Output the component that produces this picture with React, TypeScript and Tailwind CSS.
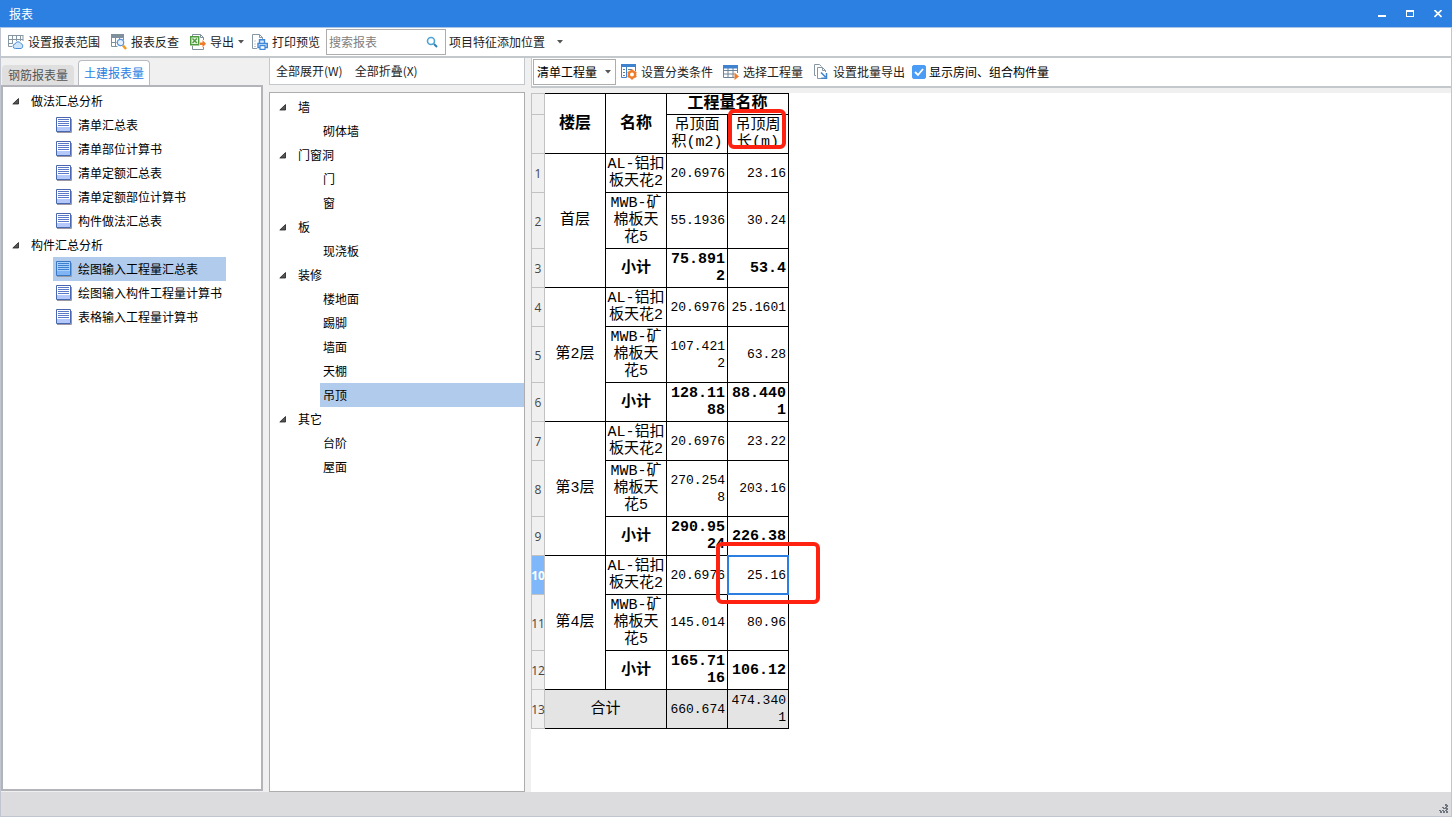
import { Fragment, useState } from "react";
import type { ReactNode } from "react";
import clsx from "clsx";

type TreeGroup = { label: string; items: string[] };
type Item = { name: string[]; area: string[]; length: string[] };
type Floor = { floor: string; items: Item[]; subtotal: { area: string[]; length: string[] } };

const reportTree: TreeGroup[] = [
    { label: "做法汇总分析", items: ["清单汇总表", "清单部位计算书", "清单定额汇总表", "清单定额部位计算书", "构件做法汇总表"] },
    { label: "构件汇总分析", items: ["绘图输入工程量汇总表", "绘图输入构件工程量计算书", "表格输入工程量计算书"] },
];

const componentTree: TreeGroup[] = [
    { label: "墙", items: ["砌体墙"] },
    { label: "门窗洞", items: ["门", "窗"] },
    { label: "板", items: ["现浇板"] },
    { label: "装修", items: ["楼地面", "踢脚", "墙面", "天棚", "吊顶"] },
    { label: "其它", items: ["台阶", "屋面"] },
];

const AL = ["AL-铝扣", "板天花2"];
const MWB = ["MWB-矿", "棉板天", "花5"];

const floors: Floor[] = [
    {
        floor: "首层",
        items: [
            { name: AL, area: ["20.6976"], length: ["23.16"] },
            { name: MWB, area: ["55.1936"], length: ["30.24"] },
        ],
        subtotal: { area: ["75.891", "2"], length: ["53.4"] },
    },
    {
        floor: "第2层",
        items: [
            { name: AL, area: ["20.6976"], length: ["25.1601"] },
            { name: MWB, area: ["107.421", "2"], length: ["63.28"] },
        ],
        subtotal: { area: ["128.11", "88"], length: ["88.440", "1"] },
    },
    {
        floor: "第3层",
        items: [
            { name: AL, area: ["20.6976"], length: ["23.22"] },
            { name: MWB, area: ["270.254", "8"], length: ["203.16"] },
        ],
        subtotal: { area: ["290.95", "24"], length: ["226.38"] },
    },
    {
        floor: "第4层",
        items: [
            { name: AL, area: ["20.6976"], length: ["25.16"] },
            { name: MWB, area: ["145.014"], length: ["80.96"] },
        ],
        subtotal: { area: ["165.71", "16"], length: ["106.12"] },
    },
];

const SELECTED_ROW = 10;

function Caret() {
    return (
        <svg width="6" height="4" viewBox="0 0 6 4" className="shrink-0" aria-hidden="true">
            <path d="M0 0h6L3 3.5z" fill="#555" />
        </svg>
    );
}

function RangeIcon() {
    return (
        <svg width="16" height="16" viewBox="0 0 16 16" className="shrink-0" fill="none" aria-hidden="true">
            <path d="M0 1.500h15M0 5.500h15M0 9.500h5M.5 1v11.500H4M4.500 1v9M8.500 1v6M12.500 1v6M15 1v6" stroke="#8796a3" />
            <path d="M7.500 14.500a2.300 2.300 0 0 1-.3-4.600 3 3 0 0 1 5.600-.4 2.600 2.600 0 0 1 .2 5z" fill="#cfe5fa" stroke="#4a90d9" />
        </svg>
    );
}

function InspectIcon() {
    return (
        <svg width="16" height="16" viewBox="0 0 16 16" className="shrink-0" fill="none" aria-hidden="true">
            <path d="M0 0h13v4H0z" fill="#7f8f9c" />
            <path d="M.5 1v11.500h6M12.500 4v2M.5 8.500h5M4.500 4v8.500M8.500 4v1" stroke="#7f8f9c" />
            <circle cx="9.500" cy="8.500" r="3.200" fill="#e6f2ff" stroke="#5b93dd" strokeWidth="1.200" />
            <path d="m12 11.500 3 3.500" stroke="#f29a1f" strokeWidth="2.500" />
        </svg>
    );
}

function ExportIcon() {
    return (
        <svg width="16" height="16" viewBox="0 0 16 16" className="shrink-0" fill="none" aria-hidden="true">
            <path d="M2.500 2V.5h8l3 3V6M2.500 12v3.500h11V13M10.500.5v3h3" stroke="#7f8f9c" />
            <path d="M.7 2.700h8v8h-8z" fill="#e8f5e4" stroke="#4f9b3f" strokeWidth="1.400" />
            <path d="m2.500 4.500 4.400 4.400M6.900 4.500 2.500 8.900" stroke="#4f9b3f" strokeWidth="1.400" />
            <path d="M10 8.500h2.500V6L16 9.700l-3.500 3.700V11H10z" fill="#f07a28" />
        </svg>
    );
}

function PrintIcon() {
    return (
        <svg width="16" height="16" viewBox="0 0 16 16" className="shrink-0" fill="none" aria-hidden="true">
            <path d="M5 14.500H.5V.5h7l3 3V5M7.500.5v3h3" stroke="#8796a3" />
            <path d="M2.500 7h2M2.500 10h2M2.500 12.500h2" stroke="#8796a3" strokeDasharray="1 1" />
            <path d="M7.500 9V5.700h5V9M6 9.500h9.300v4H6z" stroke="#3f87d8" strokeWidth="1.400" fill="#dcebfb" />
            <path d="M8 11.700h5v3.600H8z" stroke="#3f87d8" strokeWidth="1.200" fill="#fff" />
        </svg>
    );
}

function ClassifyIcon() {
    return (
        <svg width="16" height="16" viewBox="0 0 16 16" className="shrink-0" fill="none" aria-hidden="true">
            <path d="M.5 1.500h14V7M.5 1.500v12h5M5.500 1.500v12" stroke="#3f83cf" />
            <path d="M0 0h15v3H0z" fill="#3f83cf" />
            <path d="M2 5.500h2M2 8.500h2M2 11.500h2M7 5.500h4" stroke="#6b7d8c" />
            <circle cx="11" cy="10.500" r="3.200" stroke="#ee7d2b" strokeWidth="2.400" fill="#fff" />
            <path d="M11 5.500v2M11 13.500v2M6.700 8l1.600 1M13.700 12l1.600 1M6.700 13l1.600-1M13.700 9l1.600-1" stroke="#ee7d2b" strokeWidth="2" />
        </svg>
    );
}

function QuantityIcon() {
    return (
        <svg width="16" height="16" viewBox="0 0 16 16" className="shrink-0" fill="none" aria-hidden="true">
            <path d="M.5 2v11.500h11M.5 6.500h14M.5 10h11M5 4v9.500M10 4v9.500M14.500 2v7" stroke="#6f8496" />
            <path d="M0 1h15v3.500H0z" fill="#3f83cf" />
            <path d="m11.500 8.500 4.500 4-4.500 3.500z" fill="#ee7d2b" />
        </svg>
    );
}

function BatchIcon() {
    return (
        <svg width="16" height="16" viewBox="0 0 16 16" className="shrink-0" fill="none" aria-hidden="true">
            <path d="M3 11.500H1.500V.5h5l2 2" stroke="#8796a3" />
            <path d="M9 14.500H4.500v-11h5l3 3V8M9.500 3.500v3h3" stroke="#8796a3" fill="#fff" />
            <path d="m8 8.500 4.500 4.500M13.500 9v5.200H8.300" stroke="#3f83cf" strokeWidth="1.500" />
        </svg>
    );
}

function ReportIcon({ active }: { active: boolean }) {
    return (
        <svg width="17" height="16" viewBox="0 0 17 16" className="shrink-0" fill="none" aria-hidden="true">
            <path d="M2 15.500h14.500V2" stroke="#9a9aa2" />
            <path d="M1.500.5h14v14h-14z" fill={active ? "#a8d0fa" : "#fff"} stroke={active ? "#3a78c4" : "#4a66b0"} />
            <path d="M2 10h13v4H2z" fill={active ? "#7fb4f5" : "#b5c8fa"} />
            <path d="M3 2.500h11M3 4.500h11M3 6.500h11M3 8.500h11" stroke={active ? "#3f7fd0" : "#5b78c8"} />
        </svg>
    );
}

function ToolButton({ icon, caret, children }: { icon: ReactNode; caret?: boolean; children: ReactNode }) {
    return (
        <button type="button" className={clsx("flex h-5 items-center gap-1 rounded-sm whitespace-nowrap text-[#222]", caret ? "pr-0.5 pl-[5px]" : "px-[5px]")}>
            {icon}
            <span>{children}</span>
            {caret && <Caret />}
        </button>
    );
}

function Expander() {
    return (
        <svg width="7" height="7" viewBox="0 0 7 7" className="shrink-0" aria-hidden="true">
            <path d="M6.500.5v5.500H.8z" fill="#555" stroke="#222" strokeWidth=".8" />
        </svg>
    );
}

function ReportTree() {
    const [active, setActive] = useState("绘图输入工程量汇总表");

    return (
        <ul className="pt-0.5">
            {reportTree.map((group) => (
                <li key={group.label}>
                    <button type="button" className="flex h-6 items-center gap-3 pl-[9px]">
                        <Expander />
                        <span>{group.label}</span>
                    </button>
                    <ul className="flex flex-col items-start pl-[50px]">
                        {group.items.map((item) => (
                            <li key={item}>
                                <button
                                    type="button"
                                    onClick={() => setActive(item)}
                                    className={clsx("flex h-6 items-center gap-1.5 pr-7 pl-0.5 whitespace-nowrap", item === active && "bg-[#b1cbed]")}
                                >
                                    <ReportIcon active={item === active} />
                                    <span>{item}</span>
                                </button>
                            </li>
                        ))}
                    </ul>
                </li>
            ))}
        </ul>
    );
}

function ComponentTree() {
    const [active, setActive] = useState("吊顶");

    return (
        <ul className="pt-0.5">
            {componentTree.map((group) => (
                <li key={group.label}>
                    <button type="button" className="flex h-6 items-center gap-3 pl-[9px]">
                        <Expander />
                        <span>{group.label}</span>
                    </button>
                    <ul className="pl-[50px]">
                        {group.items.map((item) => (
                            <li key={item}>
                                <button
                                    type="button"
                                    onClick={() => setActive(item)}
                                    className={clsx("block h-6 w-full pl-[3px] text-left", item === active && "bg-[#b1cbed]")}
                                >
                                    {item}
                                </button>
                            </li>
                        ))}
                    </ul>
                </li>
            ))}
        </ul>
    );
}

function RowNumber({ value }: { value?: number }) {
    const selected = value === SELECTED_ROW;
    return (
        <th
            scope="row"
            className={clsx(
                "border-x border-b border-[#c2c2c2] p-0 pt-0.5 font-['Open_Sans',sans-serif] text-xs",
                selected ? "bg-[#7fb8fa] font-bold text-white" : "bg-[#f0f0f0] font-normal text-[#444]",
            )}
        >
            <div className="flex justify-center">{value}</div>
        </th>
    );
}

function Lines({ lines }: { lines: string[] }) {
    return lines.map((line, i) => (
        <Fragment key={i}>
            {i > 0 && <br />}
            {line}
        </Fragment>
    ));
}

function NameCell({ lines }: { lines: string[] }) {
    return (
        <td className="border-r border-b border-black p-0 text-center whitespace-nowrap">
            <Lines lines={lines} />
        </td>
    );
}

function NumberCell({ lines, bold, marked }: { lines: string[]; bold?: boolean; marked?: boolean }) {
    return (
        <td
            className={clsx(
                "border-r border-b border-black p-0 pr-0.5 text-right whitespace-nowrap",
                bold ? "text-[15px] font-bold" : "text-[13px]",
                marked && "relative",
            )}
        >
            <Lines lines={lines} />
            {marked && (
                <>
                    <span className="absolute -inset-px border-2 border-[#2c7fe0]" />
                    <span className="absolute -top-3.5 -right-8 -bottom-2.5 -left-3 rounded-md border-4 border-[#ff2211]" />
                </>
            )}
        </td>
    );
}

function QuantityTable() {
    let row = 0;
    return (
        <table className="w-[258px] table-fixed border-separate border-spacing-0 bg-white font-['Liberation_Mono','Noto_Sans_CJK_SC',monospace] text-[15px] leading-[17px] text-black">
            <colgroup>
                <col className="w-3.5" />
                <col className="w-[61px]" />
                <col className="w-[61px]" />
                <col className="w-[61px]" />
                <col className="w-[61px]" />
            </colgroup>
            <thead>
                <tr className="h-[22px]">
                    <td className="border border-[#c2c2c2] bg-[#f0f0f0] p-0" />
                    <th rowSpan={2} className="border-y border-r border-black p-0 text-base">楼层</th>
                    <th rowSpan={2} className="border-y border-r border-black p-0 text-base">名称</th>
                    <th colSpan={2} className="border-y border-r border-black p-0 text-base leading-[18px]">工程量名称</th>
                </tr>
                <tr className="h-[39px]">
                    <td className="border-x border-b border-[#c2c2c2] bg-[#f0f0f0] p-0" />
                    <th className="border-r border-b border-black p-0 font-normal"><Lines lines={["吊顶面", "积(m2)"]} /></th>
                    <th className="relative border-r border-b border-black p-0 font-normal">
                        <Lines lines={["吊顶周", "长(m)"]} />
                        <span className="absolute -top-1.5 right-0.5 bottom-1 left-0 rounded-md border-4 border-[#ff2211]" />
                    </th>
                </tr>
            </thead>
            <tbody>
                {floors.map((f) => (
                    <Fragment key={f.floor}>
                        {f.items.map((item, i) => {
                            row += 1;
                            return (
                                <tr key={i} className={item.name.length > 2 ? "h-14" : "h-[39px]"}>
                                    <RowNumber value={row} />
                                    {i === 0 && (
                                        <td rowSpan={3} className="border-r border-b border-black p-0 text-center">{f.floor}</td>
                                    )}
                                    <NameCell lines={item.name} />
                                    <NumberCell lines={item.area} />
                                    <NumberCell lines={item.length} marked={row === SELECTED_ROW} />
                                </tr>
                            );
                        })}
                        <tr className="h-[39px]">
                            <RowNumber value={++row} />
                            <td className="border-r border-b border-black p-0 text-center font-bold">小计</td>
                            <NumberCell lines={f.subtotal.area} bold />
                            <NumberCell lines={f.subtotal.length} bold />
                        </tr>
                    </Fragment>
                ))}
                <tr className="h-[39px] bg-[#e4e4e4]">
                    <RowNumber value={++row} />
                    <td colSpan={2} className="border-r border-b border-black p-0 text-center">合计</td>
                    <NumberCell lines={["660.674"]} />
                    <NumberCell lines={["474.340", "1"]} />
                </tr>
            </tbody>
        </table>
    );
}

function TitleBar() {
    return (
        <header className="flex h-7 shrink-0 items-center justify-between border-b border-[#a9c4e6] bg-[#2c80e2] pr-2.5 pl-[9px] text-white">
            <h1>报表</h1>
            <div className="flex gap-5">
                <button type="button" aria-label="最小化">
                    <svg width="8" height="8" viewBox="0 0 8 8"><path d="M0 5h8v2H0z" fill="#fff" /></svg>
                </button>
                <button type="button" aria-label="最大化">
                    <svg width="8" height="8" viewBox="0 0 8 8"><path d="M0 0h8v7H0zM1 2v4h6V2z" fill="#fff" fillRule="evenodd" /></svg>
                </button>
                <button type="button" aria-label="关闭">
                    <svg width="8" height="8" viewBox="0 0 8 8"><path d="m.5 0 7 7M7.500 0l-7 7" stroke="#fff" strokeWidth="1.600" /></svg>
                </button>
            </div>
        </header>
    );
}

function Toolbar() {
    return (
        <div className="flex h-[30px] shrink-0 items-center gap-px border-b-2 border-[#c3c8cd] bg-white pl-0.5">
            <ToolButton icon={<RangeIcon />}>设置报表范围</ToolButton>
            <ToolButton icon={<InspectIcon />}>报表反查</ToolButton>
            <ToolButton icon={<ExportIcon />} caret>导出</ToolButton>
            <ToolButton icon={<PrintIcon />}>打印预览</ToolButton>
            <label className="flex h-[26px] w-[120px] items-center border border-[#adadad] pr-[7px] pl-0.5">
                <input type="text" aria-label="搜索报表" placeholder="搜索报表" className="min-w-0 flex-1 outline-none placeholder:text-[#808080]" />
                <svg width="12" height="12" viewBox="0 0 12 12" fill="none" aria-hidden="true">
                    <circle cx="5" cy="5" r="3.500" stroke="#4da3d4" strokeWidth="1.600" />
                    <path d="m8 8 3 3" stroke="#2f7fb5" strokeWidth="2" />
                </svg>
            </label>
            <button type="button" className="flex items-center gap-3 pl-0.5 whitespace-nowrap text-[#222]">
                项目特征添加位置
                <Caret />
            </button>
        </div>
    );
}

function ReportPanel() {
    return (
        <aside className="flex w-[262px] shrink-0 flex-col">
            <div role="tablist" className="flex h-[27px] items-end gap-1 pl-px">
                <button type="button" role="tab" aria-selected="false" className="h-5 w-[72px] rounded-t-sm bg-[#dfdfdf] text-[#555]">钢筋报表量</button>
                <button type="button" role="tab" aria-selected="true" className="h-[25px] w-[72px] rounded-t border border-b-0 border-[#b8bcc2] bg-white text-[#2c80e2]">土建报表量</button>
            </div>
            <div className="mb-px flex-1 border-2 border-[#b2b4ba] bg-white">
                <ReportTree />
            </div>
        </aside>
    );
}

function ComponentPanel() {
    return (
        <aside className="flex w-64 shrink-0 flex-col gap-[7px]">
            <div className="flex h-[27px] items-center gap-3 border-x border-b border-[#c3c8cd] bg-white pl-1.5 text-[#222]">
                <button type="button">全部展开(W)</button>
                <button type="button">全部折叠(X)</button>
            </div>
            <div className="flex-1 border border-[#adadad] bg-white">
                <ComponentTree />
            </div>
        </aside>
    );
}

function ReportView() {
    const [showParts, setShowParts] = useState(true);

    return (
        <main className="flex min-w-0 flex-1 flex-col gap-[5px]">
            <div className="flex h-[30px] shrink-0 items-center border-b-2 border-l border-[#c3c8cd] bg-white pl-px">
                <div className="relative">
                    <select aria-label="工程量类型" className="h-[26px] w-[83px] appearance-none border border-[#adadad] bg-white pl-[3px] outline-none">
                        <option>清单工程量</option>
                    </select>
                    <span className="pointer-events-none absolute inset-y-0 right-[5px] flex items-center"><Caret /></span>
                </div>
                <ToolButton icon={<ClassifyIcon />}>设置分类条件</ToolButton>
                <ToolButton icon={<QuantityIcon />}>选择工程量</ToolButton>
                <ToolButton icon={<BatchIcon />}>设置批量导出</ToolButton>
                <label className="flex items-center gap-[3px] pl-0.5 whitespace-nowrap">
                    <span className="relative size-3.5">
                        <input
                            type="checkbox"
                            checked={showParts}
                            onChange={(e) => setShowParts(e.target.checked)}
                            className="block size-3.5 appearance-none rounded-xs border border-[#4b9cf5] checked:bg-[#4b9cf5]"
                        />
                        <svg viewBox="0 0 14 14" className="pointer-events-none absolute inset-0" fill="none" aria-hidden="true">
                            <path d="m3 7 3 3 5-6" stroke="#fff" strokeWidth="1.800" />
                        </svg>
                    </span>
                    显示房间、组合构件量
                </label>
            </div>
            <div className="flex-1 bg-white">
                <QuantityTable />
            </div>
        </main>
    );
}

export default function App() {
    return (
        <div className="flex min-h-screen flex-col bg-[#f0f0f0] font-['Noto_Sans_CJK_SC',sans-serif] text-xs text-black">
            <TitleBar />
            <div className="flex flex-1 flex-col border-x border-b border-[#c0c5d0]">
                <Toolbar />
                <div className="flex flex-1">
                    <ReportPanel />
                    <div className="w-1.5 shrink-0" />
                    <ComponentPanel />
                    <div className="w-1.5 shrink-0" />
                    <ReportView />
                </div>
                <footer className="flex h-6 shrink-0 items-end justify-end bg-[#dcdcde] pr-[3px] pb-[3px]">
                    <svg width="9" height="9" viewBox="0 0 9 9" fill="#6f7680" aria-hidden="true">
                        <path d="M6 0h2v1h1v2H7V2H6zM3 3h2v1h1v1H4V4H3zM6 3h2v1h1v2H7V5H6zM0 6h2v1h1v2H1V7H0zM3 6h2v1h1v2H4V7H3zM6 6h2v1h1v2H7V7H6z" />
                    </svg>
                </footer>
            </div>
        </div>
    );
}
